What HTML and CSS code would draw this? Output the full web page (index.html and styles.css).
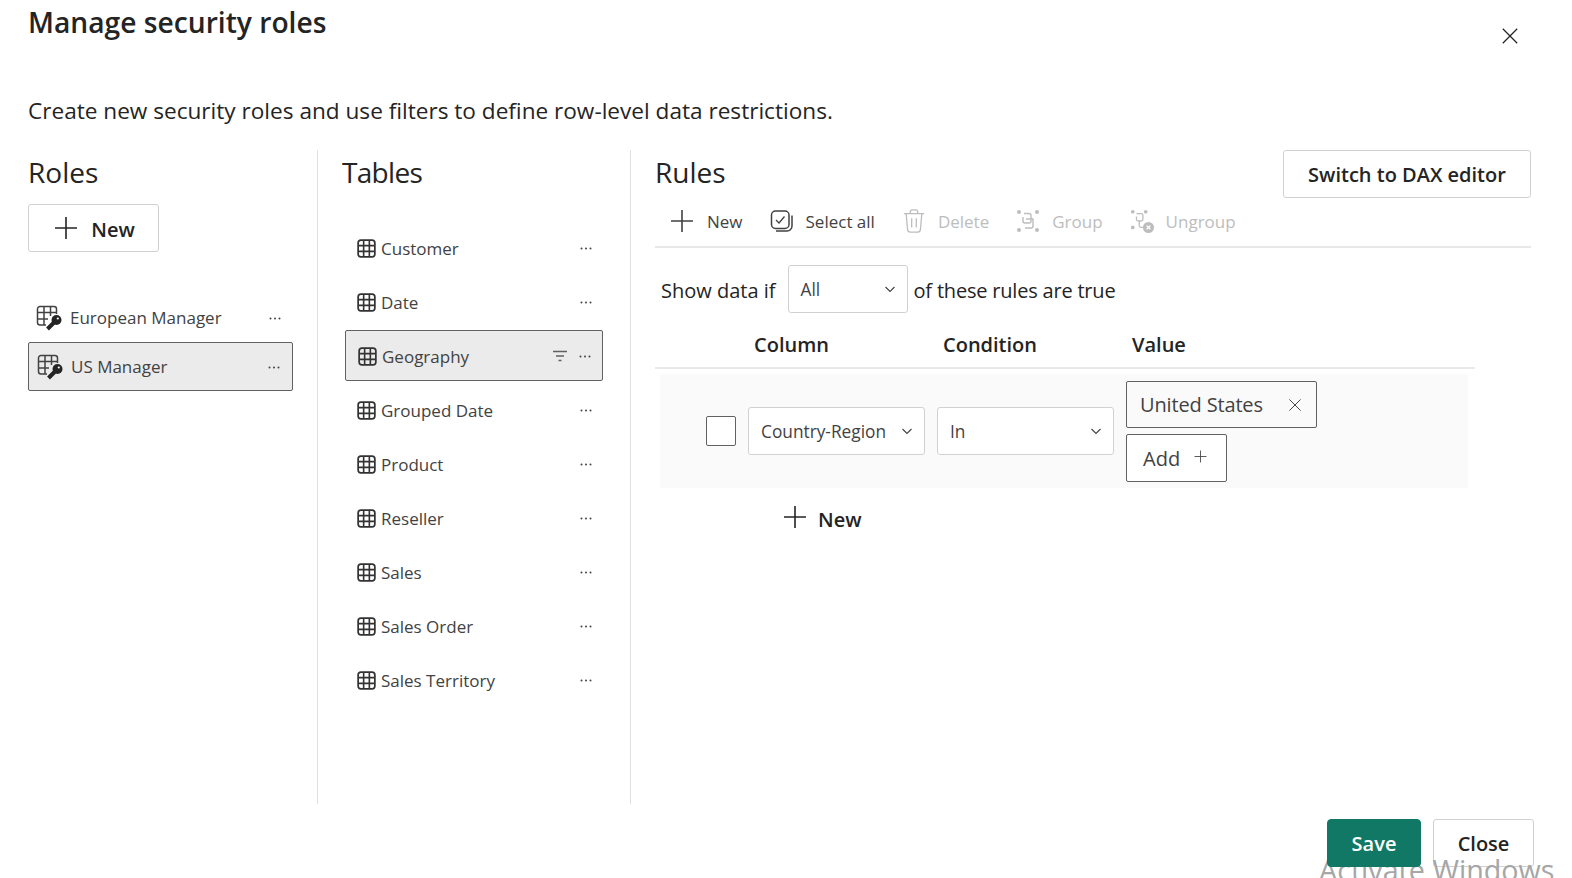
FILE: index.html
```html
<!DOCTYPE html>
<html lang="en">
<head>
    <meta charset="UTF-8">
    <title>Manage security roles</title>
    <link rel="stylesheet" href="styles.css">
</head>
<body>
    <svg class="sprite" width="0" height="0">
        <symbol id="i-table" viewBox="0 0 20 20">
            <rect x="1.2" y="1.2" width="17.600" height="17.600" rx="3" fill="none" stroke="currentColor" stroke-width="1.800"/>
            <path d="M7 2v16M13 2v16M2 7h16M2 13h16" fill="none" stroke="currentColor" stroke-width="1.700"/>
        </symbol>
        <symbol id="i-role" viewBox="0 0 26 26">
            <path d="M10 20H4a2.500 2.500 0 0 1-2.500-2.500V4A2.500 2.500 0 0 1 4 1.500h14A2.500 2.500 0 0 1 20.500 4v5" fill="none" stroke="currentColor" stroke-width="1.500"/>
            <path d="M8 2v18M14.500 2v9M2 7.500h18M2 14h10" fill="none" stroke="currentColor" stroke-width="1.500"/>
            <circle cx="20.500" cy="15" r="5" fill="#242424"/>
            <path d="M18.500 17L11.500 24" fill="none" stroke="#242424" stroke-width="4"/>
            <circle cx="21.800" cy="13.500" r="1.100" fill="#fff"/>
        </symbol>
        <symbol id="i-plus" viewBox="0 0 24 24">
            <path d="M12 1v22M1 12h22" fill="none" stroke="currentColor" stroke-width="1.600"/>
        </symbol>
        <symbol id="i-chevron" viewBox="0 0 12 12">
            <path d="M1.500 4l4.500 4.500L10.500 4" fill="none" stroke="currentColor" stroke-width="1.100"/>
        </symbol>
        <symbol id="i-close" viewBox="0 0 20 20">
            <path d="M2 2l16 16M18 2L2 18" fill="none" stroke="currentColor" stroke-width="1.400"/>
        </symbol>
        <symbol id="i-select" viewBox="0 0 24 24">
            <rect x="1.500" y="2" width="17.500" height="17.500" rx="4" fill="none" stroke="currentColor" stroke-width="1.500"/>
            <path d="M6 11l3 3 5.500-6.500" fill="none" stroke="currentColor" stroke-width="1.300"/>
            <path d="M22 6.500V17a5 5 0 0 1-5 5H6" fill="none" stroke="currentColor" stroke-width="1.500"/>
        </symbol>
        <symbol id="i-trash" viewBox="0 0 24 26">
            <path d="M1 5h22M8 5V3a2 2 0 0 1 2-2h4a2 2 0 0 1 2 2v2M3.500 5l1.500 17a3 3 0 0 0 3 3h8a3 3 0 0 0 3-3l1.500-17M9.500 10v10M14.500 10v10" fill="none" stroke="currentColor" stroke-width="1.400"/>
        </symbol>
        <symbol id="i-group" viewBox="0 0 24 24">
            <circle cx="3" cy="3" r="2" fill="currentColor"/>
            <circle cx="21" cy="3" r="2" fill="currentColor"/>
            <circle cx="3" cy="21" r="2" fill="currentColor"/>
            <circle cx="21" cy="21" r="2" fill="currentColor"/>
            <path d="M8 4.500h5a2 2 0 0 1 2 2V12a2 2 0 0 1-2 2H9a2 2 0 0 1-2-2V8M10 10h7v7a2 2 0 0 1-2 2H9" fill="none" stroke="currentColor" stroke-width="1.400"/>
        </symbol>
        <symbol id="i-ungroup" viewBox="0 0 26 26">
            <circle cx="3" cy="3" r="2" fill="currentColor"/>
            <circle cx="17" cy="3" r="2" fill="currentColor"/>
            <circle cx="3" cy="20" r="2" fill="currentColor"/>
            <path d="M7 5h5a2 2 0 0 1 2 2v4a2 2 0 0 1-2 2H9a2 2 0 0 1-2-2V8M10 13v5a2 2 0 0 0 2 2h2" fill="none" stroke="currentColor" stroke-width="1.400"/>
            <circle cx="20" cy="20" r="6" fill="currentColor"/>
            <path d="M18 18l4 4M22 18l-4 4" fill="none" stroke="#fff" stroke-width="1.400"/>
        </symbol>
        <symbol id="i-filter" viewBox="0 0 14 12">
            <path d="M0 1.500h14M3 6h8M5.500 10.500h3" fill="none" stroke="currentColor" stroke-width="1.300"/>
        </symbol>
        <symbol id="i-dots" viewBox="0 0 12 3">
            <circle cx="1.500" cy="1.500" r="1" fill="currentColor"/>
            <circle cx="6" cy="1.500" r="1" fill="currentColor"/>
            <circle cx="10.500" cy="1.500" r="1" fill="currentColor"/>
        </symbol>
    </svg>

    <div class="dialog">
        <header class="dialog-head">
            <h1>Manage security roles</h1>
            <button class="close-x" aria-label="Close"><svg><use href="#i-close"/></svg></button>
        </header>
        <p class="intro">Create new security roles and use filters to define row-level data restrictions.</p>

        <div class="columns">
            <section class="col col-roles">
                <h2>Roles</h2>
                <button class="btn btn-new"><svg class="plus"><use href="#i-plus"/></svg>New</button>
                <ul class="role-list">
                    <li class="role"><svg class="role-icon"><use href="#i-role"/></svg><span class="grow">European Manager</span><svg class="dots"><use href="#i-dots"/></svg></li>
                    <li class="role selected"><svg class="role-icon"><use href="#i-role"/></svg><span class="grow">US Manager</span><svg class="dots"><use href="#i-dots"/></svg></li>
                </ul>
            </section>

            <section class="col col-tables">
                <h2>Tables</h2>
                <ul class="table-list">
                    <li class="table"><svg class="table-icon"><use href="#i-table"/></svg><span class="grow">Customer</span><svg class="dots"><use href="#i-dots"/></svg></li>
                    <li class="table"><svg class="table-icon"><use href="#i-table"/></svg><span class="grow">Date</span><svg class="dots"><use href="#i-dots"/></svg></li>
                    <li class="table selected"><svg class="table-icon"><use href="#i-table"/></svg><span class="grow">Geography</span><svg class="filter-icon"><use href="#i-filter"/></svg><svg class="dots"><use href="#i-dots"/></svg></li>
                    <li class="table"><svg class="table-icon"><use href="#i-table"/></svg><span class="grow">Grouped Date</span><svg class="dots"><use href="#i-dots"/></svg></li>
                    <li class="table"><svg class="table-icon"><use href="#i-table"/></svg><span class="grow">Product</span><svg class="dots"><use href="#i-dots"/></svg></li>
                    <li class="table"><svg class="table-icon"><use href="#i-table"/></svg><span class="grow">Reseller</span><svg class="dots"><use href="#i-dots"/></svg></li>
                    <li class="table"><svg class="table-icon"><use href="#i-table"/></svg><span class="grow">Sales</span><svg class="dots"><use href="#i-dots"/></svg></li>
                    <li class="table"><svg class="table-icon"><use href="#i-table"/></svg><span class="grow">Sales Order</span><svg class="dots"><use href="#i-dots"/></svg></li>
                    <li class="table"><svg class="table-icon"><use href="#i-table"/></svg><span class="grow">Sales Territory</span><svg class="dots"><use href="#i-dots"/></svg></li>
                </ul>
            </section>

            <section class="col col-rules">
                <div class="rules-head">
                    <h2>Rules</h2>
                    <button class="btn btn-dax">Switch to DAX editor</button>
                </div>
                <div class="toolbar">
                    <span class="tool tool-new"><svg class="tool-plus"><use href="#i-plus"/></svg>New</span>
                    <span class="tool tool-select"><svg class="tool-icon"><use href="#i-select"/></svg>Select all</span>
                    <span class="tool tool-delete off"><svg class="tool-icon"><use href="#i-trash"/></svg>Delete</span>
                    <span class="tool tool-group off"><svg class="tool-icon"><use href="#i-group"/></svg>Group</span>
                    <span class="tool off"><svg class="tool-icon"><use href="#i-ungroup"/></svg>Ungroup</span>
                </div>
                <div class="show-row">
                    <span class="show-label">Show data if</span>
                    <span class="select select-all"><span class="grow">All</span><svg class="chevron"><use href="#i-chevron"/></svg></span>
                    <span class="show-tail">of these rules are true</span>
                </div>
                <div class="rule-head">
                    <span class="head-col">Column</span>
                    <span class="head-cond">Condition</span>
                    <span>Value</span>
                </div>
                <div class="rule">
                    <span class="check"></span>
                    <span class="select select-col"><span class="grow">Country-Region</span><svg class="chevron"><use href="#i-chevron"/></svg></span>
                    <span class="select select-cond"><span class="grow">In</span><svg class="chevron"><use href="#i-chevron"/></svg></span>
                    <div class="values">
                        <span class="tag"><span class="grow">United States</span><svg class="tag-x"><use href="#i-close"/></svg></span>
                        <span class="add">Add<svg class="add-plus"><use href="#i-plus"/></svg></span>
                    </div>
                </div>
                <div class="new-rule"><svg class="plus"><use href="#i-plus"/></svg>New</div>
            </section>
        </div>

        <footer class="dialog-foot">
            <button class="btn btn-save">Save</button>
            <button class="btn btn-close">Close</button>
        </footer>
    </div>

    <div class="watermark">Activate Windows</div>
</body>
</html>
```

FILE: styles.css
```css
/* General Styles */
html, body {
    margin: 0;
    height: 878px;
    overflow: hidden;
}

body {
    font-family: "Open Sans", "Noto Sans", sans-serif;
    color: #242424;
    background: white;
    position: relative;
}

.sprite {
    position: absolute;
}

ul {
    list-style: none;
    margin: 0;
    padding: 0;
}

.grow {
    flex: 1;
    white-space: nowrap;
}

button {
    font-family: inherit;
    color: inherit;
}

/* Header */
.dialog {
    height: 878px;
    box-sizing: border-box;
    padding: 0 38px 0 28px;
}

.dialog-head {
    display: flex;
    justify-content: space-between;
    height: 96px;
}

h1 {
    margin: 2px 0 0;
    font-size: 28.2px;
    line-height: 40px;
    font-weight: 600;
}

.close-x {
    border: none;
    background: none;
    padding: 0;
    margin: 27px 15px 0 0;
    width: 18px;
    height: 18px;
}

.close-x svg {
    width: 18px;
    height: 18px;
    display: block;
}

.intro {
    margin: 0;
    font-size: 22.6px;
    line-height: 30px;
    height: 54px;
}

/* Columns */
.columns {
    display: flex;
    height: 654px;
}

.col {
    box-sizing: border-box;
    border-right: 1px solid #e0e0e0;
}

.col-roles {
    width: 290px;
}

.col-tables {
    width: 313px;
    padding-left: 24px;
}

.col-tables h2 {
    letter-spacing: -0.7px;
}

.col-rules {
    flex: 1;
    border-right: none;
    padding-left: 24px;
}

h2 {
    margin: 0;
    font-size: 28px;
    line-height: 44px;
    font-weight: 400;
}

.btn {
    background: white;
    border: 1px solid #d1d1d1;
    border-radius: 3px;
    font-weight: 600;
    font-size: 20px;
    padding: 1px 0 0;
    display: flex;
    align-items: center;
    justify-content: center;
}

.btn-new {
    width: 131px;
    height: 48px;
    margin-top: 10px;
    padding: 2px 0 0 2px;
}

.plus {
    width: 24px;
    height: 24px;
    margin-right: 13px;
}

.btn-new .plus {
    margin-bottom: 2px;
}

/* Lists */
.role-list {
    margin-top: 41px;
    width: 265px;
}

.role, .table {
    display: flex;
    align-items: center;
    box-sizing: border-box;
    font-size: 17px;
    color: #424242;
}

.role {
    height: 49px;
    padding: 0 12px 0 8px;
}

.selected {
    background: #ebebeb;
    border: 1px solid #616161;
    border-radius: 2px;
}

.role-icon {
    width: 26px;
    height: 26px;
    margin-right: 8px;
    color: #424242;
}

.role .dots {
    margin-top: 2px;
}

.table-list {
    margin: 28px 0 0 3px;
    width: 258px;
}

.table {
    height: 54px;
    padding: 0 11px 2px 12px;
}

.table.selected {
    height: 51px;
    margin-bottom: 3px;
    padding: 1px 11px 0 12px;
}

.table-icon {
    width: 19px;
    height: 19px;
    margin-right: 5px;
    color: #333;
}

.filter-icon {
    width: 14px;
    height: 12px;
    margin-right: 12px;
    color: #616161;
}

.dots {
    width: 12px;
    height: 3px;
    color: #424242;
}

/* Rules */
.rules-head {
    display: flex;
    justify-content: space-between;
    height: 48px;
    margin-right: 3px;
}

.btn-dax {
    width: 248px;
    height: 48px;
}

.toolbar {
    display: flex;
    align-items: center;
    height: 50px;
    box-sizing: border-box;
    margin-right: 3px;
    padding: 0 0 2px 15px;
    border-bottom: 2px solid #e8e8e8;
    font-size: 17px;
    color: #424242;
}

.tool {
    display: flex;
    align-items: center;
    white-space: nowrap;
}

.tool-plus {
    width: 24px;
    height: 24px;
    margin-right: 13px;
}

.tool-new, .tool-select, .tool-delete, .tool-group {
    margin-right: 27px;
}

.tool-icon {
    width: 24px;
    height: 24px;
    margin-right: 12px;
}

.off {
    color: #bdbdbd;
}

.show-row {
    display: flex;
    align-items: center;
    height: 48px;
    margin-top: 17px;
    padding-left: 6px;
    gap: 6px;
    font-size: 20px;
}

.show-label {
    margin-right: 6px;
    padding-top: 2px;
}

.show-tail {
    padding-top: 2px;
    letter-spacing: -0.2px;
}

.select {
    display: flex;
    align-items: center;
    box-sizing: border-box;
    height: 48px;
    background: white;
    border: 1px solid #d1d1d1;
    border-radius: 3px;
    padding: 0 11px 0 12px;
    font-size: 17.3px;
    color: #424242;
}

.chevron {
    width: 12px;
    height: 12px;
    color: #424242;
}

.select-all {
    width: 120px;
}

.rule-head {
    display: flex;
    align-items: center;
    width: 820px;
    height: 56px;
    box-sizing: border-box;
    padding: 8px 0 0 99px;
    border-bottom: 2px solid #e8e8e8;
    font-size: 20px;
    font-weight: 600;
}

.head-col, .head-cond {
    width: 189px;
}

.rule {
    display: flex;
    align-items: center;
    width: 808px;
    height: 114px;
    box-sizing: border-box;
    margin: 5px 0 0 5px;
    padding-left: 46px;
    background: #fafafa;
}

.check {
    width: 30px;
    height: 30px;
    box-sizing: border-box;
    background: white;
    border: 1px solid #616161;
    border-radius: 2px;
    margin-right: 12px;
}

.select-col, .select-cond {
    width: 177px;
    margin-right: 12px;
}

.values {
    display: flex;
    flex-direction: column;
    align-items: flex-start;
    gap: 6px;
    margin-top: 1px;
}

.tag, .add {
    display: flex;
    align-items: center;
    box-sizing: border-box;
    border: 1px solid #616161;
    border-radius: 2px;
    font-size: 20px;
    color: #424242;
}

.tag {
    width: 191px;
    height: 47px;
    padding: 0 14px 0 13px;
    letter-spacing: -0.15px;
}

.tag-x {
    width: 14px;
    height: 14px;
}

.add {
    width: 101px;
    height: 48px;
    padding-left: 16px;
    background: white;
}

.add-plus {
    width: 13px;
    height: 13px;
    margin: 0 0 3px 14px;
}

.new-rule {
    display: flex;
    align-items: center;
    height: 48px;
    margin: 7px 0 0 128px;
    font-size: 20px;
    font-weight: 600;
}

.new-rule .plus {
    margin-right: 11px;
    margin-bottom: 4px;
}

/* Footer */
.dialog-foot {
    display: flex;
    justify-content: flex-end;
    gap: 12px;
    margin: 15px 0 0;
}

.btn-save {
    width: 94px;
    height: 48px;
    background: #117865;
    border-color: #117865;
    border-radius: 4px;
    color: white;
    position: relative;
    z-index: 1;
}

.btn-close {
    width: 101px;
    height: 48px;
}

/* Not part of the dialog: the Windows activation notice over the page */
.watermark {
    position: absolute;
    left: 1319px;
    top: 851px;
    font-size: 28.7px;
    line-height: 38px;
    color: #a6a6a6;
    white-space: nowrap;
}
```
